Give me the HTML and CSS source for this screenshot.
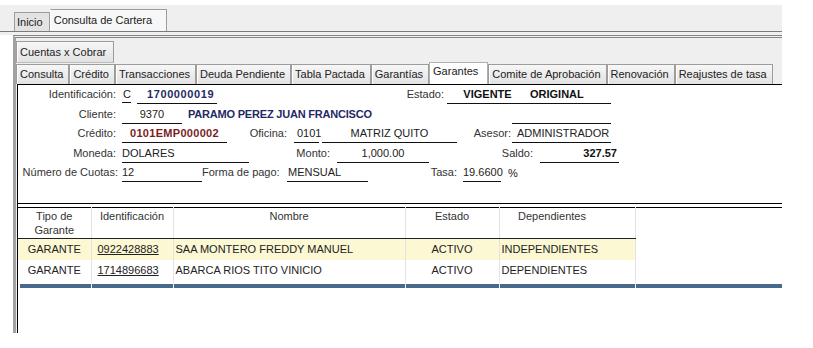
FILE: index.html
```html
<!DOCTYPE html>
<html lang="es">
<head>
    <meta charset="UTF-8">
    <meta name="viewport" content="width=device-width, initial-scale=1.0">
    <title>Consulta de Cartera</title>
    <link rel="stylesheet" href="styles.css">
</head>
<body>

<div class="screen">
    <div class="top-strip">
        <div class="main-tabs">
            <div class="main-tab">Inicio</div>
            <div class="main-tab active">Consulta de Cartera</div>
        </div>
    </div>

    <div class="panel">
        <div class="sub-tabs first">
            <div class="sub-tab">Cuentas x Cobrar</div>
        </div>
        <div class="sub-tabs">
            <div class="sub-tab">Consulta</div>
            <div class="sub-tab">Crédito</div>
            <div class="sub-tab">Transacciones</div>
            <div class="sub-tab">Deuda Pendiente</div>
            <div class="sub-tab">Tabla Pactada</div>
            <div class="sub-tab">Garantías</div>
            <div class="sub-tab active">Garantes</div>
            <div class="sub-tab">Comite de Aprobación</div>
            <div class="sub-tab">Renovación</div>
            <div class="sub-tab">Reajustes de tasa</div>
        </div>

        <div class="content">
            <div class="credit-form">
                <div class="frow">
                    <span class="lbl">Identificación:</span>
                    <span class="fld f-tipo">C</span>
                    <span class="fld f-ident navy">1700000019</span>
                    <span class="lbl l-estado">Estado:</span>
                    <span class="fld f-estado strong">VIGENTE</span>
                    <span class="fld f-origen strong">ORIGINAL</span>
                </div>
                <div class="frow">
                    <span class="lbl">Cliente:</span>
                    <span class="fld f-cliente">9370</span>
                    <span class="fld f-nombre navy">PARAMO PEREZ JUAN FRANCISCO</span>
                    <span class="fld f-extra"></span>
                </div>
                <div class="frow">
                    <span class="lbl">Crédito:</span>
                    <span class="fld f-credito maroon">0101EMP000002</span>
                    <span class="lbl l-oficina">Oficina:</span>
                    <span class="fld f-ofcod">0101</span>
                    <span class="fld f-ofnom">MATRIZ QUITO</span>
                    <span class="lbl l-asesor">Asesor:</span>
                    <span class="fld f-asesor">ADMINISTRADOR</span>
                </div>
                <div class="frow">
                    <span class="lbl">Moneda:</span>
                    <span class="fld f-moneda">DOLARES</span>
                    <span class="lbl l-monto">Monto:</span>
                    <span class="fld f-monto">1,000.00</span>
                    <span class="lbl l-saldo">Saldo:</span>
                    <span class="fld f-saldo strong">327.57</span>
                </div>
                <div class="frow">
                    <span class="lbl l-cuotas">Número de Cuotas:</span>
                    <span class="fld f-cuotas">12</span>
                    <span class="lbl l-pago">Forma de pago:</span>
                    <span class="fld f-pago">MENSUAL</span>
                    <span class="lbl l-tasa">Tasa:</span>
                    <span class="fld f-tasa">19.6600</span>
                    <span class="pct">%</span>
                </div>
            </div>

            <table class="grid">
                <colgroup>
                    <col class="c-tipo">
                    <col class="c-ident">
                    <col class="c-nombre">
                    <col class="c-estado">
                    <col class="c-dep">
                    <col>
                </colgroup>
                <thead>
                    <tr>
                        <th>Tipo de<br>Garante</th>
                        <th>Identificación</th>
                        <th>Nombre</th>
                        <th>Estado</th>
                        <th class="h-dep">Dependientes</th>
                        <th class="filler"></th>
                    </tr>
                </thead>
                <tbody>
                    <tr class="selected">
                        <td class="center">GARANTE</td>
                        <td class="ident"><a href="#">0922428883</a></td>
                        <td>SAA MONTERO FREDDY MANUEL</td>
                        <td class="center">ACTIVO</td>
                        <td>INDEPENDIENTES</td>
                        <td class="filler"></td>
                    </tr>
                    <tr>
                        <td class="center">GARANTE</td>
                        <td class="ident"><a href="#">1714896683</a></td>
                        <td>ABARCA RIOS TITO VINICIO</td>
                        <td class="center">ACTIVO</td>
                        <td>DEPENDIENTES</td>
                        <td class="filler"></td>
                    </tr>
                    <tr class="bar-row">
                        <td><div class="bar first"></div></td>
                        <td><div class="bar"></div></td>
                        <td><div class="bar"></div></td>
                        <td><div class="bar"></div></td>
                        <td><div class="bar"></div></td>
                        <td class="filler"><div class="bar"></div></td>
                    </tr>
                </tbody>
            </table>
        </div>
    </div>
</div>

</body>
</html>
```

FILE: styles.css
```css
body {
    margin: 0;
    font-family: "Liberation Sans", Arial, sans-serif;
    font-size: 11px;
    color: #222;
    background: #fff;
}
.screen {
    width: 782px;
    padding-top: 5px;
}

/* top level tabs */
.top-strip {
    background: #efefef;
    padding-bottom: 3px;
}
.main-tabs {
    display: flex;
    align-items: flex-end;
    height: 26px;
    padding-left: 14px;
    border-bottom: 1px solid #7a7a7a;
}
.main-tab {
    height: 18px;
    line-height: 19px;
    padding: 0 6px 0 2px;
    background: #e3e3e3;
    border: 1px solid #9c9c9c;
    border-bottom: none;
}
.main-tab.active {
    height: 21px;
    line-height: 20px;
    padding: 0 14px 0 3px;
    background: #f7f7f7;
    border-left-color: #fff;
}

/* panel */
.panel {
    margin-left: 13px;
    height: 295px;
    border-top: 3px double #858585;
    border-left: 3px solid #a2a2a2;
    background: #efefef;
}
.sub-tabs {
    display: flex;
    align-items: flex-end;
    height: 21px;
}
.sub-tabs.first {
    height: 25px;
}
.sub-tab {
    height: 19px;
    line-height: 19px;
    padding: 0 5px 0 3px;
    background: linear-gradient(#f7f7f7, #e2e2e2);
    border: 1px solid #9d9d9d;
    border-bottom: none;
    box-shadow: inset 1px 0 #fff;
}
.sub-tabs.first .sub-tab {
    height: 20px;
    line-height: 20px;
    padding-right: 7px;
    border-bottom: 1px solid #bdbdbd;
}
.sub-tab.active {
    height: 21px;
    line-height: 17px;
    background: #fff;
    border-color: #b0b0b0;
    padding-right: 9px;
}

/* white content area */
.content {
    margin-left: 1px;
    height: 248px;
    border-left: 1px solid #000;
    border-top: 1px solid #000;
    background: #fff;
}

.credit-form {
    height: 118px;
    border-bottom: 1px solid #000;
}
.frow {
    display: flex;
    align-items: stretch;
    height: 19.5px;
}
.lbl {
    width: 98px;
    flex-shrink: 0;
    text-align: right;
    color: #333;
    line-height: 19px;
    white-space: nowrap;
}
.fld {
    flex-shrink: 0;
    height: 18px;
    line-height: 19px;
    border-bottom: 1px solid #111;
    white-space: nowrap;
}
.navy {
    color: #1f2a66;
    font-weight: bold;
}
.maroon {
    color: #7a1e1e;
    font-weight: bold;
}
.strong {
    font-weight: bold;
    color: #111;
}

.f-tipo { width: 9px; margin-left: 6px; padding-left: 1px; box-sizing: border-box; }
.f-ident { width: 70px; margin-left: 6px; padding-left: 10px; letter-spacing: 0.6px; }
.l-estado { width: 227px; }
.f-estado { width: 81px; margin-left: 3px; text-align: center; }
.f-origen { width: 81px; padding-left: 2px; }

.f-cliente { width: 60px; margin-left: 6px; text-align: center; }
.f-nombre { width: 324px; padding-left: 6px; border-bottom: none; letter-spacing: -0.2px; }
.f-extra { width: 99px; }

.f-credito { width: 105px; margin-left: 6px; text-align: center; letter-spacing: 0.3px; }
.l-oficina { width: 60px; }
.f-ofcod { width: 22px; margin-left: 7px; padding-left: 3px; }
.f-ofnom { width: 135px; margin-left: 3px; text-align: center; }
.l-asesor { width: 54px; }
.f-asesor { width: 94px; margin-left: 1px; padding-left: 5px; }

.f-moneda { width: 127px; margin-left: 6px; }
.l-monto { width: 81px; }
.f-monto { width: 92px; margin-left: 7px; text-align: center; }
.l-saldo { width: 104px; }
.f-saldo { width: 77px; margin-left: 7px; padding-right: 2px; text-align: right; }

.l-cuotas { width: 100px; }
.f-cuotas { width: 80px; margin-left: 4px; }
.l-pago { width: 75px; }
.f-pago { width: 80px; margin-left: 10px; padding-left: 1px; }
.l-tasa { width: 89px; }
.f-tasa { width: 38px; margin-left: 6px; }
.pct {
    margin-left: 7px;
    line-height: 21px;
}

/* guarantors grid */
.grid {
    margin-top: 3px;
    width: 764px;
    table-layout: fixed;
    border-collapse: collapse;
    border-top: 1px solid #000;
}
.c-tipo { width: 73px; }
.c-ident { width: 82px; }
.c-nombre { width: 232px; }
.c-estado { width: 94px; }
.c-dep { width: 136px; }
.grid th {
    height: 29px;
    padding: 1px 2px 0;
    vertical-align: top;
    font-weight: normal;
    line-height: 14px;
    color: #333;
    border-right: 1px solid #e2e2e2;
    border-bottom: 1px solid #222;
}
.grid th.h-dep {
    padding-right: 32px;
}
.grid td {
    height: 21px;
    padding: 0 2px;
    line-height: 21px;
    white-space: nowrap;
    border-right: 1px solid #e2e2e2;
}
.grid .filler {
    border-right: none;
    border-bottom: none;
}
.grid td.center,
.grid th {
    text-align: center;
}
.grid td.ident {
    padding-left: 6px;
}
.grid a {
    color: #222;
    text-decoration: underline;
}
.grid tr.selected td {
    background: #fcf8d3;
}
.grid tr.selected td.filler {
    background: #fff;
}
.grid tr.bar-row td {
    height: 4px;
    padding: 3px 0 0;
    line-height: 0;
    border-right-color: #f2f2f2;
}
.bar {
    height: 4px;
    background: #46698c;
}
.bar.first {
    margin-left: 2px;
}
```
